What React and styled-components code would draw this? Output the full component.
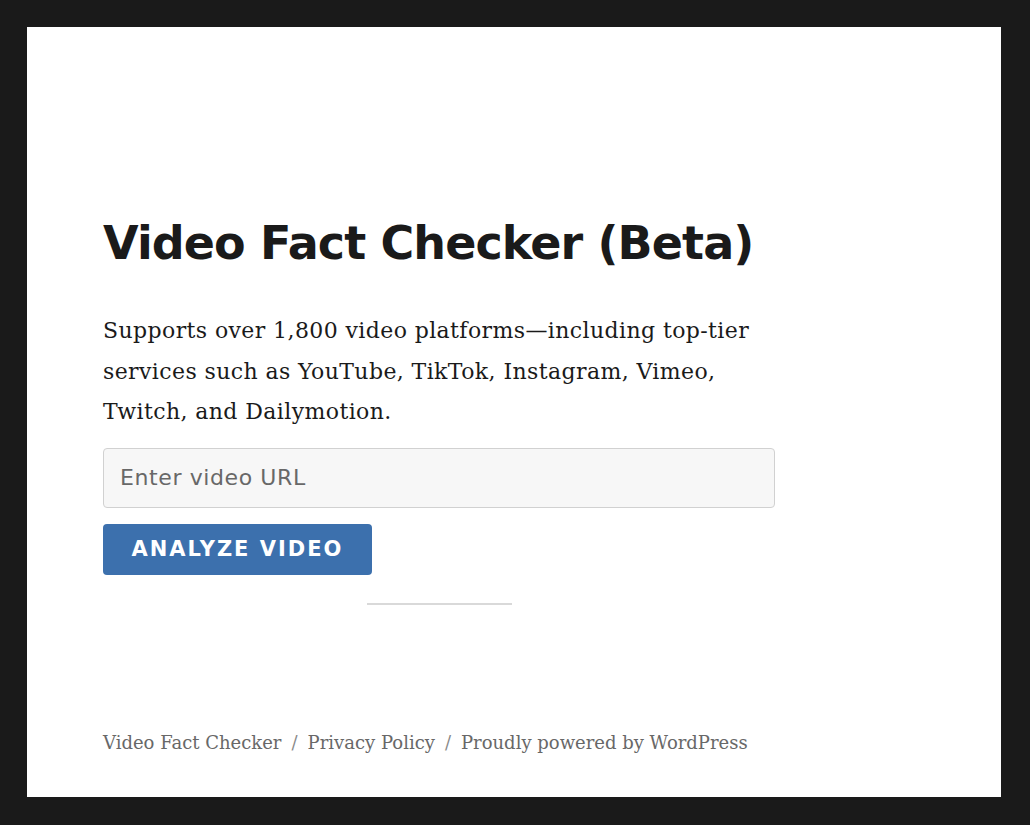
import React from "react";
import styled, { createGlobalStyle } from "styled-components";

const GlobalStyle = createGlobalStyle`
  *, *::before, *::after { box-sizing: border-box; }
  html, body { margin: 0; padding: 0; }
  body {
    background: #1a1a1a;
    font-family: "DejaVu Serif", "Liberation Serif", serif;
    color: #1a1a1a;
  }
`;

const Frame = styled.div`
  padding: 27px 29px 28px 27px;
  height: 825px;
`;

const Page = styled.div`
  background: #ffffff;
  height: 770px;
  padding: 189px 76px 0 76px;
  display: flex;
  flex-direction: column;
`;

const Column = styled.main`
  width: 672px;
  display: flex;
  flex-direction: column;
`;

const Title = styled.h1`
  margin: 0;
  font-family: "DejaVu Sans", "Liberation Sans", sans-serif;
  font-weight: 700;
  font-size: 46px;
  line-height: 1.2;
  letter-spacing: -0.9px;
  color: #1a1a1a;
`;

const Lead = styled.p`
  margin: 40px 0 0;
  font-size: 22px;
  line-height: 40.5px;
  letter-spacing: 0.4px;
  color: #1a1a1a;
`;

const UrlForm = styled.form`
  margin-top: 15px;
  display: flex;
  flex-direction: column;
  align-items: flex-start;
  gap: 16px;
`;

const UrlInput = styled.input`
  width: 100%;
  height: 60px;
  padding: 0 16px;
  background: #f7f7f7;
  border: 1px solid #d1d1d1;
  border-radius: 4px;
  font-family: "DejaVu Sans", "Liberation Sans", sans-serif;
  font-size: 22px;
  letter-spacing: 0.6px;
  color: #1a1a1a;
  outline: none;
  &::placeholder { color: #686868; }
`;

const SubmitButton = styled.button`
  width: 269px;
  height: 51px;
  border: none;
  border-radius: 4px;
  background: #3c70ad;
  color: #ffffff;
  font-family: "DejaVu Sans", "Liberation Sans", sans-serif;
  font-weight: 700;
  font-size: 21px;
  letter-spacing: 2px;
  text-transform: uppercase;
  cursor: pointer;
`;

const Divider = styled.hr`
  align-self: center;
  width: 145px;
  height: 2px;
  margin: 28px 0 0;
  border: none;
  background: #d9d9d9;
`;

const Footer = styled.footer`
  margin-top: 124px;
  font-size: 18px;
  line-height: 28px;
  color: #686868;
  display: flex;
  gap: 10px;
`;

const FooterLink = styled.a`
  color: #686868;
  text-decoration: none;
`;

const Sep = styled.span`
  color: #8a8a8a;
`;

export default function App() {
  return (
    <>
      <GlobalStyle />
      <Frame>
        <Page>
          <Column>
            <Title>Video Fact Checker (Beta)</Title>
            <Lead>
              Supports over 1,800 video platforms—including top-tier services
              such as YouTube, TikTok, Instagram, Vimeo, Twitch, and
              Dailymotion.
            </Lead>
            <UrlForm onSubmit={(e) => e.preventDefault()}>
              <UrlInput type="url" placeholder="Enter video URL" />
              <SubmitButton type="submit">Analyze Video</SubmitButton>
            </UrlForm>
            <Divider />
            <Footer>
              <FooterLink href="#">Video Fact Checker</FooterLink>
              <Sep>/</Sep>
              <FooterLink href="#">Privacy Policy</FooterLink>
              <Sep>/</Sep>
              <FooterLink href="#">Proudly powered by WordPress</FooterLink>
            </Footer>
          </Column>
        </Page>
      </Frame>
    </>
  );
}
